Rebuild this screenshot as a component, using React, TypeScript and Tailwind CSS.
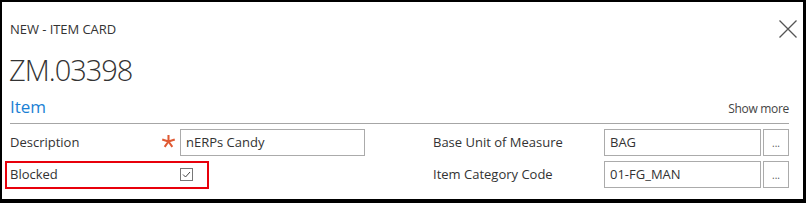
const font = { fontFamily: '"Open Sans", "Noto Sans", sans-serif' }

function Lookup({ value }: { value: string }) {
  return (
    <div className="flex h-[27px] gap-[2px]">
      <div className="flex w-[157px] items-center border border-[#ababab] px-[5px] text-[13px] text-[#333]">
        {value}
      </div>
      <div className="flex w-[26px] items-end justify-center border border-[#ababab] pb-[7px] text-[10px] leading-none text-[#555]">
        ...
      </div>
    </div>
  )
}

export default function App() {
  return (
    <div
      className="relative h-[203px] w-[806px] border-t-2 border-r-[3px] border-b-4 border-l-2 border-black bg-white"
      style={font}
    >
      {/* Header */}
      <div className="flex items-start justify-between pr-[6px] pl-[8px] pt-[19px]">
        <div className="text-[13px] leading-[16px] tracking-[-0.05px] text-[#333]">NEW - ITEM CARD</div>
        <svg viewBox="0 0 18 18" className="-mt-[1px] h-[18px] w-[18px]">
          <path d="M0.5 0.5 L17.5 17.5 M17.5 0.5 L0.5 17.5" stroke="#555" strokeWidth="1.3" fill="none" />
        </svg>
      </div>

      <div className="pl-[7px] pt-[14px] text-[29px] leading-[36px] font-light tracking-[-1px] text-[#333]">ZM.03398</div>

      {/* Section */}
      <div className="mt-[8px] mr-[14px] ml-[8px] flex items-end justify-between border-b border-[#a6a6a6] pb-[5px]">
        <div className="text-[17px] leading-[22px] text-[#1a7fd4]">Item</div>
        <div className="text-[12px] leading-[18px] tracking-[-0.3px] text-[#444]">Show more</div>
      </div>

      {/* Fields */}
      <div className="mt-[5px] flex flex-col gap-[5px] pl-[8px] text-[13px] text-[#333]">
        <div className="flex h-[27px] items-center">
          <div className="relative flex h-full w-[170px] items-center">
            Description
            <svg viewBox="0 0 16 16" className="absolute top-[5px] right-[4px] h-[15px] w-[15px]">
              <path
                d="M8 1 V8 M8 8 L14.7 5.8 M8 8 L1.3 5.8 M8 8 L12.1 13.7 M8 8 L3.9 13.7"
                stroke="#e05a33"
                strokeWidth="2.2"
                fill="none"
              />
            </svg>
          </div>
          <div className="flex h-full w-[185px] items-center border border-[#ababab] px-[5px]">nERPs Candy</div>
          <div className="ml-[68px] w-[171px]">Base Unit of Measure</div>
          <Lookup value="BAG" />
        </div>

        <div className="flex h-[27px] items-center">
          <div className="flex h-full w-[170px] items-center">Blocked</div>
          <div className="flex h-[13px] w-[13px] items-center justify-center border border-[#777]">
            <svg viewBox="0 0 11 11" className="h-[11px] w-[11px]">
              <path d="M2 5.5 L4.5 8 L9 3" fill="none" stroke="#444" strokeWidth="1" />
            </svg>
          </div>
          <div className="ml-[240px] w-[171px]">Item Category Code</div>
          <Lookup value="01-FG_MAN" />
        </div>
      </div>

      {/* Highlight box */}
      <div className="absolute top-[159px] left-[3px] h-[28px] w-[204px] border-2 border-[#e8000b]" />
    </div>
  )
}
